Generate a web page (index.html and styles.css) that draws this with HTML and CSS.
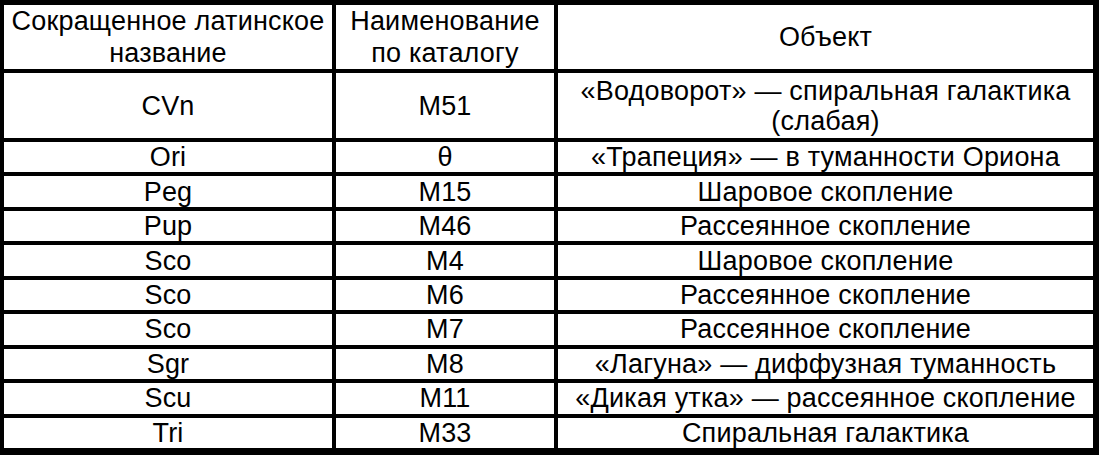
FILE: index.html
```html
<!DOCTYPE html>
<html lang="ru">
<head>
<meta charset="utf-8">
<link rel="stylesheet" href="styles.css">
</head>
<body>
<div class="table">
  <div class="cell head">Сокращенное латинское<br>название</div>
  <div class="cell head">Наименование<br>по каталогу</div>
  <div class="cell head">Объект</div>

  <div class="cell">CVn</div>
  <div class="cell">M51</div>
  <div class="cell">«Водоворот» — спиральная галактика<br>(слабая)</div>

  <div class="cell">Ori</div>
  <div class="cell">θ</div>
  <div class="cell">«Трапеция» — в туманности Ориона</div>

  <div class="cell">Peg</div>
  <div class="cell">M15</div>
  <div class="cell">Шаровое скопление</div>

  <div class="cell">Pup</div>
  <div class="cell">M46</div>
  <div class="cell">Рассеянное скопление</div>

  <div class="cell">Sco</div>
  <div class="cell">M4</div>
  <div class="cell">Шаровое скопление</div>

  <div class="cell">Sco</div>
  <div class="cell">M6</div>
  <div class="cell">Рассеянное скопление</div>

  <div class="cell">Sco</div>
  <div class="cell">M7</div>
  <div class="cell">Рассеянное скопление</div>

  <div class="cell">Sgr</div>
  <div class="cell">M8</div>
  <div class="cell">«Лагуна» — диффузная туманность</div>

  <div class="cell">Scu</div>
  <div class="cell">M11</div>
  <div class="cell">«Дикая утка» — рассеянное скопление</div>

  <div class="cell">Tri</div>
  <div class="cell">M33</div>
  <div class="cell">Спиральная галактика</div>
</div>
</body>
</html>
```

FILE: styles.css
```css
html, body {
  margin: 0;
  padding: 0;
  background: #fff;
}

.table {
  box-sizing: border-box;
  width: 1099px;
  height: 455px;
  padding: 5px 6px 7px 4px;
  background: #000;
  display: grid;
  grid-template-columns: 328px 218px 535px;
  grid-template-rows: 64px 65px repeat(9, minmax(0, 1fr));
  gap: 4px;
  font-family: "Liberation Sans", Arial, sans-serif;
  font-size: 27px;
  letter-spacing: 0.2px;
  color: #000;
}

.cell {
  background: #fff;
  display: flex;
  align-items: center;
  justify-content: center;
  text-align: center;
  line-height: 30px;
  white-space: nowrap;
  overflow: hidden;
}

.head {
  line-height: 32px;
}
```
